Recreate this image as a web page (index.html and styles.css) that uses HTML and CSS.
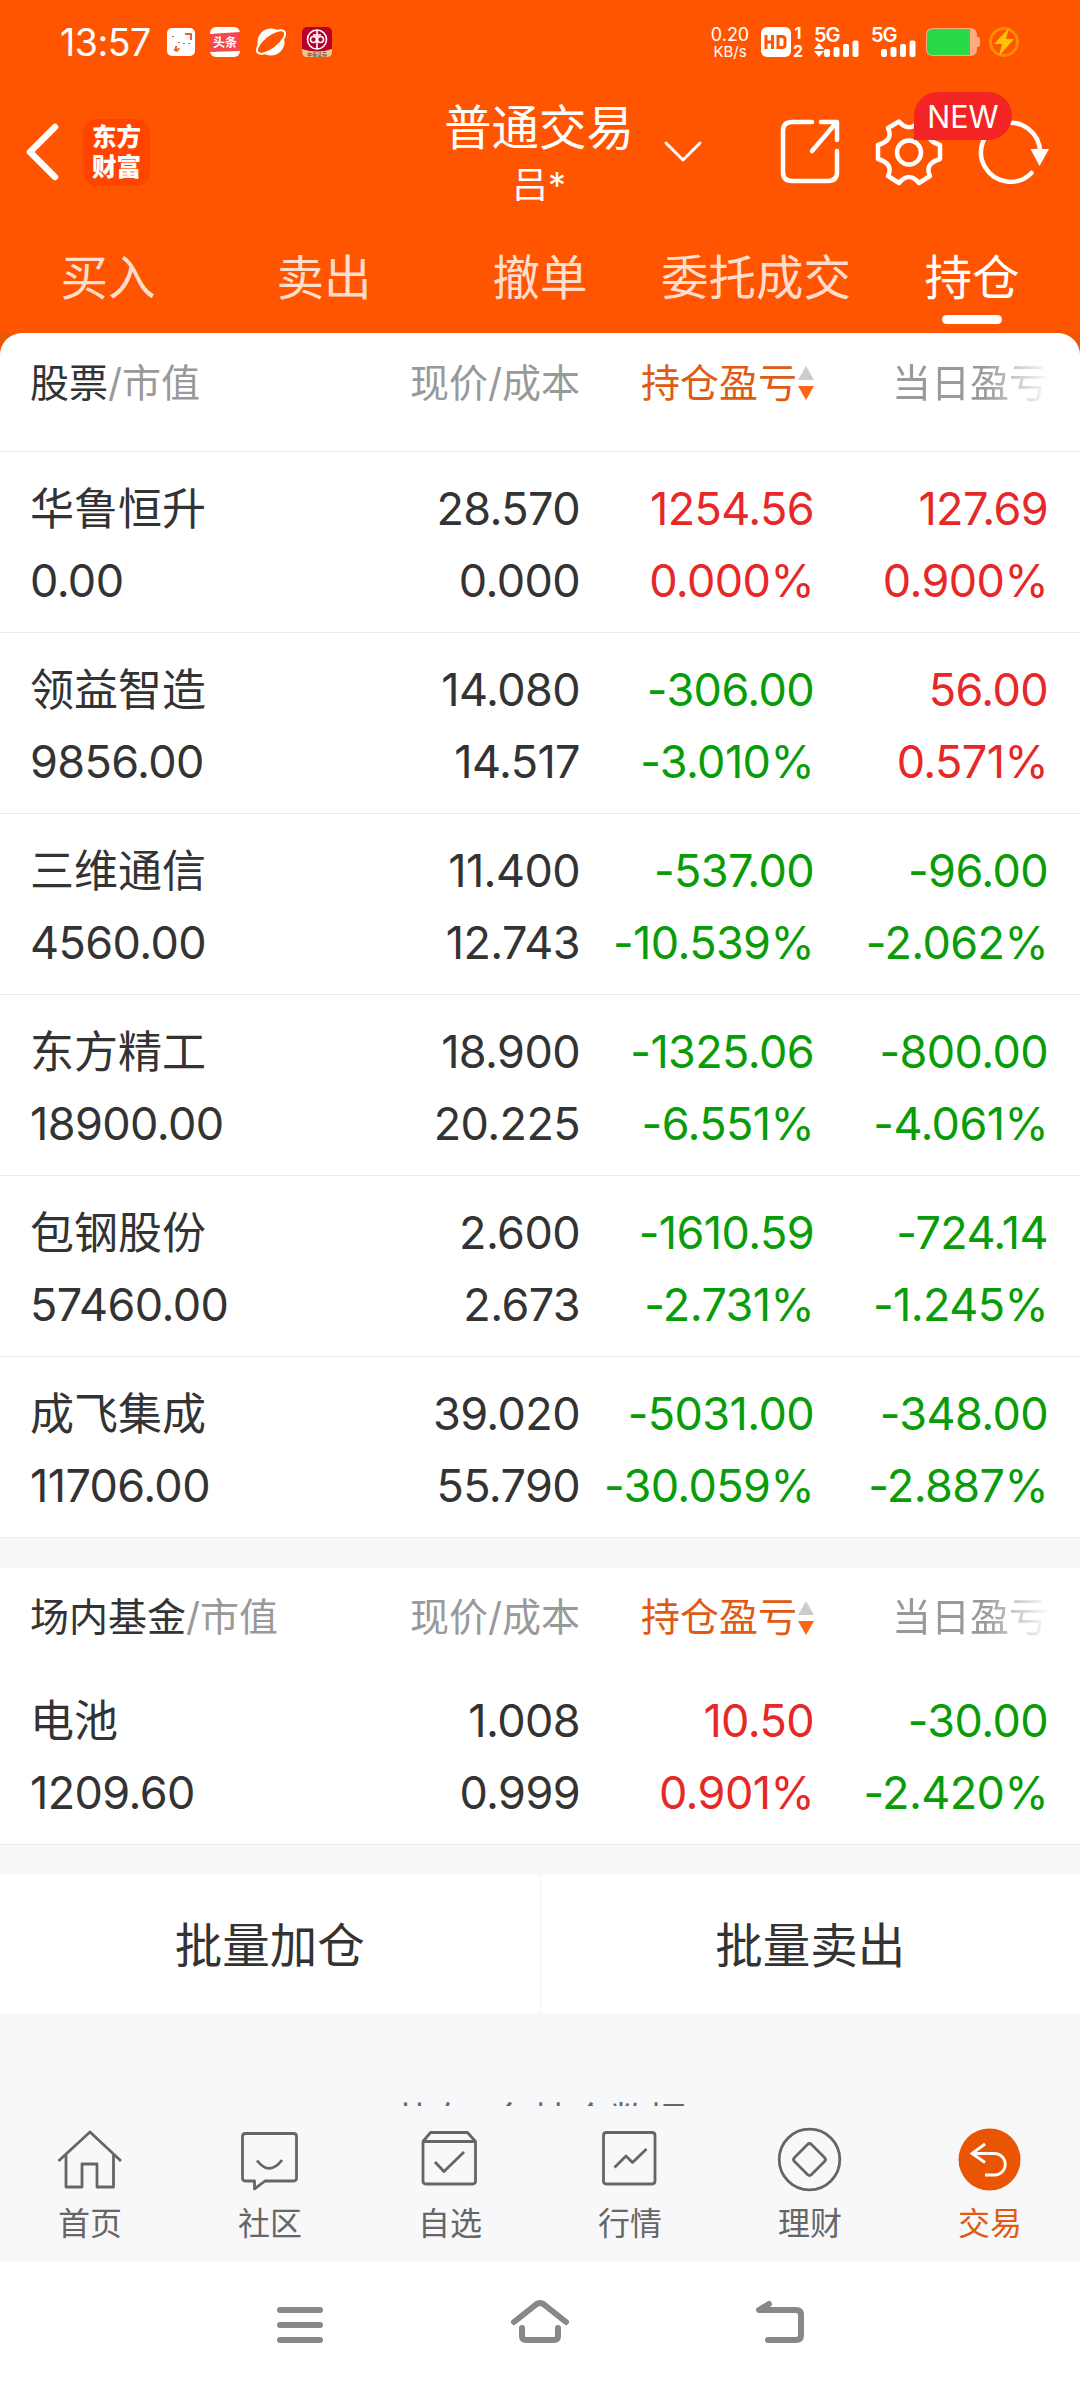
FILE: index.html
```html
<!DOCTYPE html>
<html lang="zh-CN">
<head>
  <meta charset="UTF-8" />
  <meta name="viewport" content="width=device-width, initial-scale=1.0"/>
  <title>普通交易 - 持仓</title>
  <link rel="stylesheet" href="styles.css">
</head>
<body>
  <div class="top">
    <!-- Status bar -->
    <div class="status">
      <span class="time">13:57</span>
      <div class="apps">
        <svg width="28" height="28" viewBox="0 0 28 28">
          <rect width="28" height="28" rx="5" fill="#fff"/>
          <path d="M18 6h6v6M6 8v1M12 14v1M17 15v1M22 15v1M9 18v5M7 21q3 4 5-1" fill="none" stroke="#e8632a" stroke-width="2"/>
        </svg>
        <svg width="30" height="30" viewBox="0 0 30 30">
          <rect width="30" height="30" rx="6" fill="#fff"/>
          <path d="M0 7L30 5V24L0 25z" fill="#f5484d"/>
          <text class="toutiao" x="15" y="19.500" text-anchor="middle">头条</text>
        </svg>
        <svg width="32" height="30" viewBox="0 0 32 30">
          <circle cx="16" cy="15" r="13.500" fill="#fff"/>
          <ellipse cx="16" cy="15" rx="17" ry="7" transform="rotate(-38 16 15)" fill="#ff5500" stroke="#fff" stroke-width="2"/>
        </svg>
        <svg width="30" height="30" viewBox="0 0 30 30">
          <rect width="30" height="30" rx="5" fill="#b8002c"/>
          <path d="M0 22q15 5 30 0v3q0 5-5 5H5q-5 0-5-5z" fill="#f3c48f"/>
          <g fill="none" stroke="#fff" stroke-width="1.600">
            <circle cx="15" cy="12.500" r="9.500"/>
            <circle cx="11.500" cy="12.500" r="3"/>
            <circle cx="18.500" cy="12.500" r="3"/>
            <path d="M15 3v19M11 8h8"/>
          </g>
          <text class="bank" x="15" y="28.500" text-anchor="middle">中泰证券</text>
        </svg>
      </div>
      <div class="speed"><span>0.20</span><span class="unit">KB/s</span></div>
      <svg class="hd" width="44" height="32" viewBox="0 0 44 32">
        <rect y="1" width="30" height="30" rx="6" fill="#fff"/>
        <path d="M5 9v14M11.500 9v14M5 16h6.500M17 10.500h4q3 0 3 3v5q0 3-3 3h-4z" fill="none" stroke="#ff5500" stroke-width="3"/>
        <text x="37" y="13" class="sim" text-anchor="middle">1</text>
        <text x="37" y="31" class="sim" text-anchor="middle">2</text>
      </svg>
      <svg class="sig" width="46" height="32" viewBox="0 0 46 32">
        <text x="0" y="15.500" class="net">5G</text>
        <path d="M0 23L5 17L10 23zM0 25H10L5 31z" fill="#fff"/>
        <g fill="#fff">
          <rect x="10" y="23" width="6" height="8" rx="2"/>
          <rect x="19.500" y="21" width="6" height="10" rx="2"/>
          <rect x="29" y="18" width="6" height="13" rx="2"/>
          <rect x="38.500" y="14.500" width="6" height="16.500" rx="2"/>
        </g>
      </svg>
      <svg class="sig2" width="46" height="32" viewBox="0 0 46 32">
        <text x="0" y="15.500" class="net">5G</text>
        <g fill="#fff">
          <rect x="10" y="23" width="6" height="8" rx="2"/>
          <rect x="19.500" y="21" width="6" height="10" rx="2"/>
          <rect x="29" y="18" width="6" height="13" rx="2"/>
          <rect x="38.500" y="14.500" width="6" height="16.500" rx="2"/>
        </g>
      </svg>
      <svg class="battery" width="54" height="28" viewBox="0 0 54 28">
        <path d="M7 0H44q7 0 7 7v2h1q2 0 2 2v6q0 2-2 2h-1v2q0 7-7 7H7q-7 0-7-7V7q0-7 7-7z" fill="#ffaa80"/>
        <path d="M7 1H44V27H7q-6 0-6-6V7q0-6 6-6z" fill="#28d948"/>
      </svg>
      <svg class="bolt" width="30" height="30" viewBox="0 0 30 30">
        <circle cx="15" cy="15" r="13.500" fill="none" stroke="#ff8a00" stroke-width="3"/>
        <path d="M20 1L5 17h8L10 29L25 12h-8z" fill="#ffc400"/>
      </svg>
    </div>

    <!-- Title bar -->
    <div class="titlebar">
      <svg class="back" width="36" height="60" viewBox="0 0 36 60">
        <path d="M30 5L5 30L30 55" fill="none" stroke="#fff" stroke-width="6.500" stroke-linecap="round" stroke-linejoin="round"/>
      </svg>
      <div class="logo">东方<br>财富</div>
      <div class="account">
        <div class="title">普通交易</div>
        <div class="user">吕*</div>
      </div>
      <svg class="chevron" width="38" height="22" viewBox="0 0 38 22">
        <path d="M2 2L19 19L36 2" fill="none" stroke="#fff" stroke-width="3" stroke-linecap="round"/>
      </svg>
      <div class="actions">
        <svg width="64" height="70" viewBox="0 0 64 70">
          <g fill="none" stroke="#fff" stroke-width="4.500" stroke-linecap="round" stroke-linejoin="round">
            <path d="M33 5H13Q4 5 4 14V55Q4 64 13 64H49Q58 64 58 55V34"/>
            <path d="M42 5H58V23M57 6L33 34"/>
          </g>
        </svg>
        <div class="gear">
          <svg width="72" height="70" viewBox="0 0 72 70">
            <path d="M26 4.500L15 11Q21 23 5 28V42Q21 47 15 59L26 66Q36 54 46 66L57 59Q51 47 67 42V28Q51 23 57 11L46 4.500Q36 16 26 4.500Z" fill="none" stroke="#fff" stroke-width="4.500" stroke-linejoin="round"/>
            <circle cx="36" cy="35.500" r="12" fill="none" stroke="#fff" stroke-width="4.500"/>
          </svg>
          <span class="new">NEW</span>
        </div>
        <svg width="76" height="70" viewBox="0 0 76 70">
          <path d="M56.500 56A29.500 29.500 0 1 1 65 35" fill="none" stroke="#fff" stroke-width="4.500" stroke-linecap="round"/>
          <path d="M55.500 32H74L64.500 49z" fill="#fff"/>
        </svg>
      </div>
    </div>

    <!-- Trade tabs -->
    <div class="tabs">
      <div class="tab">买入</div>
      <div class="tab">卖出</div>
      <div class="tab">撤单</div>
      <div class="tab">委托成交</div>
      <div class="tab active">持仓</div>
    </div>
  </div>

  <!-- Holdings -->
  <div class="content">
    <div class="card stocks">
      <div class="head">
        <div><b>股票</b>/市值</div>
        <div>现价/成本</div>
        <div class="sorted">持仓盈亏<span class="sort"><i class="up"></i><i class="down"></i></span></div>
        <div class="fade">当日盈亏</div>
      </div>
      <div class="row">
        <div><span class="name">华鲁恒升</span><br>0.00</div>
        <div>28.570<br>0.000</div>
        <div class="red">1254.56<br>0.000%</div>
        <div class="red">127.69<br>0.900%</div>
      </div>
      <div class="row">
        <div><span class="name">领益智造</span><br>9856.00</div>
        <div>14.080<br>14.517</div>
        <div class="green">-306.00<br>-3.010%</div>
        <div class="red">56.00<br>0.571%</div>
      </div>
      <div class="row">
        <div><span class="name">三维通信</span><br>4560.00</div>
        <div>11.400<br>12.743</div>
        <div class="green">-537.00<br>-10.539%</div>
        <div class="green">-96.00<br>-2.062%</div>
      </div>
      <div class="row">
        <div><span class="name">东方精工</span><br>18900.00</div>
        <div>18.900<br>20.225</div>
        <div class="green">-1325.06<br>-6.551%</div>
        <div class="green">-800.00<br>-4.061%</div>
      </div>
      <div class="row">
        <div><span class="name">包钢股份</span><br>57460.00</div>
        <div>2.600<br>2.673</div>
        <div class="green">-1610.59<br>-2.731%</div>
        <div class="green">-724.14<br>-1.245%</div>
      </div>
      <div class="row">
        <div><span class="name">成飞集成</span><br>11706.00</div>
        <div>39.020<br>55.790</div>
        <div class="green">-5031.00<br>-30.059%</div>
        <div class="green">-348.00<br>-2.887%</div>
      </div>
    </div>

    <div class="card funds">
      <div class="head">
        <div><b>场内基金</b>/市值</div>
        <div>现价/成本</div>
        <div class="sorted">持仓盈亏<span class="sort"><i class="up"></i><i class="down"></i></span></div>
        <div class="fade">当日盈亏</div>
      </div>
      <div class="row">
        <div><span class="name">电池</span><br>1209.60</div>
        <div>1.008<br>0.999</div>
        <div class="red">10.50<br>0.901%</div>
        <div class="green">-30.00<br>-2.420%</div>
      </div>
    </div>

    <div class="batch">
      <div>批量加仓</div>
      <div>批量卖出</div>
    </div>
    <div class="total">共有8条持仓数据</div>
  </div>

  <!-- Bottom navigation -->
  <div class="nav">
    <div class="nav-item">
      <svg width="68" height="68" viewBox="0 0 68 68">
        <path d="M2.500 36L34 7L65 36M10 30V62H26V39H41V62H57.500V30"/>
      </svg>
      <span>首页</span>
    </div>
    <div class="nav-item">
      <svg width="68" height="68" viewBox="0 0 68 68">
        <path d="M9.500 8.500H57.500Q60.500 8.500 60.500 11.500V53Q60.500 56 57.500 56H29L18.500 64V56H9.500Q6.500 56 6.500 53V11.500Q6.500 8.500 9.500 8.500ZM21 35.500Q33.500 51.500 46 35"/>
      </svg>
      <span>社区</span>
    </div>
    <div class="nav-item">
      <svg width="68" height="68" viewBox="0 0 68 68">
        <path d="M7 16.500L14.500 7.500H51.500L59.500 16.500V56Q59.500 59 56.500 59H10Q7 59 7 56ZM7 16.500H59.500M19 37L28 46.500L48 27"/>
      </svg>
      <span>自选</span>
    </div>
    <div class="nav-item">
      <svg width="68" height="68" viewBox="0 0 68 68">
        <path d="M10.500 7.500H56Q59 7.500 59 10.500V56Q59 59 56 59H10.500Q7.500 59 7.500 56V10.500Q7.500 7.500 10.500 7.500ZM18.500 42.500L30 31L36.500 37.500L50.500 24"/>
      </svg>
      <span>行情</span>
    </div>
    <div class="nav-item">
      <svg width="68" height="68" viewBox="0 0 68 68">
        <circle cx="33.500" cy="34.500" r="30.300"/>
        <path d="M31.500 19.500Q33.500 17.500 35.500 19.500L48.500 32.500Q50.500 34.500 48.500 36.500L35.500 49.500Q33.500 51.500 31.500 49.500L18.500 36.500Q16.500 34.500 18.500 32.500Z"/>
      </svg>
      <span>理财</span>
    </div>
    <div class="nav-item active">
      <svg width="68" height="68" viewBox="0 0 68 68">
        <circle class="disc" cx="33.500" cy="34.500" r="31"/>
        <path class="arrow" d="M29 19L16 28.500L29 37.500M16 28.500H39.500A10.800 10.800 0 0 1 39.500 50H29"/>
      </svg>
      <span>交易</span>
    </div>
  </div>

  <!-- System keys -->
  <div class="keys">
    <svg width="60" height="50" viewBox="0 0 60 50">
      <path d="M10 10H50M10 25H50M10 40H50"/>
    </svg>
    <svg width="60" height="50" viewBox="0 0 60 50">
      <path d="M4 22L26 4.500Q30 1.500 34 4.500L56 22M12 28V36Q12 40 16 40H44Q48 40 48 36V28"/>
    </svg>
    <svg width="60" height="50" viewBox="0 0 60 50">
      <path d="M19 4L9 10H46Q51 10 51 15V35Q51 40 46 40H18"/>
    </svg>
  </div>
</body>
</html>
```
FILE: styles.css
```css
* {
  box-sizing: border-box;
}
body {
  margin: 0;
  width: 1080px;
  height: 2388px;
  display: flex;
  flex-direction: column;
  overflow: hidden;
  background-color: #fff;
  color: #333;
  font-family: Inter, "Noto Sans CJK SC", sans-serif;
}
svg {
  display: block;
  flex: none;
  overflow: visible;
}
.top {
  height: 333px;
  background-color: #ff5500;
  color: #fff;
}

/* status bar */
.status {
  display: flex;
  align-items: center;
  height: 84px;
  padding-left: 60px;
}
.time {
  width: 107px;
  font-size: 37.5px;
  letter-spacing: -0.5px;
}
.apps {
  display: flex;
  align-items: center;
  gap: 15px;
  width: 544px;
}
.toutiao {
  font-size: 12px;
  font-weight: bold;
  fill: #fff;
}
.bank {
  font-size: 5px;
  fill: #333;
}
.speed {
  display: flex;
  flex-direction: column;
  align-items: center;
  width: 38px;
  font-size: 18px;
  line-height: 18px;
}
.unit {
  font-size: 15px;
  line-height: 15px;
}
.hd {
  margin-left: 12px;
}
.sim {
  font-size: 16px;
  font-weight: bold;
  fill: #fff;
}
.net {
  font-size: 20px;
  font-weight: 600;
  letter-spacing: -1px;
  fill: #fff;
}
.sig {
  margin-left: 9px;
}
.sig2 {
  margin-left: 11px;
}
.battery {
  margin-left: 9px;
}
.bolt {
  margin-left: 9px;
}

/* title bar */
.titlebar {
  display: flex;
  align-items: center;
  height: 136px;
  padding: 0 29px 0 25px;
}
.logo {
  width: 67px;
  height: 67px;
  margin-left: 22px;
  padding-top: 3px;
  border-radius: 14px;
  background-color: #ff4400;
  font-size: 24.5px;
  font-weight: 900;
  line-height: 30px;
  text-align: center;
}
.account {
  width: 196px;
  margin-left: 291px;
  padding-top: 5px;
  text-align: center;
}
.title {
  font-size: 47.5px;
  line-height: 60px;
}
.user {
  font-size: 36px;
  line-height: 54px;
}
.chevron {
  margin-left: 27px;
}
.actions {
  display: flex;
  gap: 30px;
  margin-left: auto;
}
.gear {
  position: relative;
}
.new {
  position: absolute;
  left: 41px;
  top: -25px;
  width: 98px;
  height: 48px;
  border-radius: 24px 24px 24px 0;
  background-color: #f22424;
  font-size: 30.5px;
  line-height: 50px;
  text-align: center;
}

/* tabs */
.tabs {
  display: flex;
  height: 113px;
}
.tab {
  flex: 1;
  display: flex;
  flex-direction: column;
  align-items: center;
  padding-top: 22px;
  font-size: 47.5px;
  line-height: 72px;
  color: #ffddcc;
}
.tab.active {
  color: #fff;
}
.tab.active::after {
  content: "";
  width: 60px;
  height: 9px;
  margin-top: 1px;
  border-radius: 5px;
  background-color: #fff;
}

/* holdings */
.content {
  height: 1773px;
  overflow: hidden;
  background: linear-gradient(#e85805 30px, #f7f8fa 30px);
}
.card {
  margin-bottom: 30px;
  background-color: #fff;
}
.stocks {
  border-radius: 22px 22px 0 0;
}
.head, .row {
  display: grid;
  grid-template-columns: 281px 269px 234px 234px;
  padding: 0 32px 0 30px;
  text-align: right;
}
.head > :first-child, .row > :first-child {
  text-align: left;
}
.head {
  height: 96px;
  font-size: 39px;
  line-height: 98px;
  color: #999;
}
.stocks .head {
  height: 119px;
  border-bottom: 1px solid #ebebeb;
  line-height: 100px;
}
.head b {
  font-weight: normal;
  color: #333;
}
.head .sorted {
  display: flex;
  justify-content: flex-end;
  color: #e05a12;
}
.sort {
  display: flex;
  flex-direction: column;
  justify-content: center;
  gap: 6px;
  height: 100px;
  margin-left: 1px;
}
.up, .down {
  border: 8px solid transparent;
}
.up {
  border-top: 0;
  border-bottom: 14px solid #ccc;
}
.down {
  border-bottom: 0;
  border-top: 14px solid #ff6315;
}
.fade {
  -webkit-mask-image: linear-gradient(to right, #000 170px, rgba(0,0,0,0.1) 230px);
  mask-image: linear-gradient(to right, #000 170px, rgba(0,0,0,0.1) 230px);
}
.row {
  height: 181px;
  padding-top: 21px;
  border-bottom: 1px solid #ebebeb;
  font-size: 45px;
  line-height: 72px;
  letter-spacing: -0.6px;
}
.name {
  font-size: 44px;
  letter-spacing: 0;
}
.red {
  color: #e62828;
}
.green {
  color: #099c09;
}

/* batch buttons */
.batch {
  display: flex;
  height: 138px;
  background-color: #fff;
}
.batch div {
  flex: 1;
  font-size: 47.5px;
  line-height: 142px;
  text-align: center;
}
.batch div + div {
  border-left: 1px solid #f3f3f3;
}
.total {
  padding-top: 82px;
  font-size: 38.5px;
  line-height: 52px;
  text-align: center;
  color: #666;
}

/* bottom navigation */
.nav {
  display: flex;
  height: 156px;
  background-color: #f8f8fa;
}
.nav-item {
  flex: 1;
  display: flex;
  flex-direction: column;
  align-items: center;
  padding-top: 19px;
  font-size: 32px;
  line-height: 61px;
  color: #666;
}
.nav-item svg {
  fill: none;
  stroke: #666;
  stroke-width: 2.8;
  stroke-linejoin: round;
}
.nav-item.active {
  color: #e05a12;
}
.nav-item .disc {
  fill: #ea5504;
  stroke: none;
}
.nav-item .arrow {
  stroke: #fff;
  stroke-linejoin: miter;
}

/* system keys */
.keys {
  display: flex;
  justify-content: center;
  gap: 180px;
  padding-top: 38px;
}
.keys svg {
  fill: none;
  stroke: #888;
  stroke-width: 6;
  stroke-linecap: round;
  stroke-linejoin: round;
}
```
